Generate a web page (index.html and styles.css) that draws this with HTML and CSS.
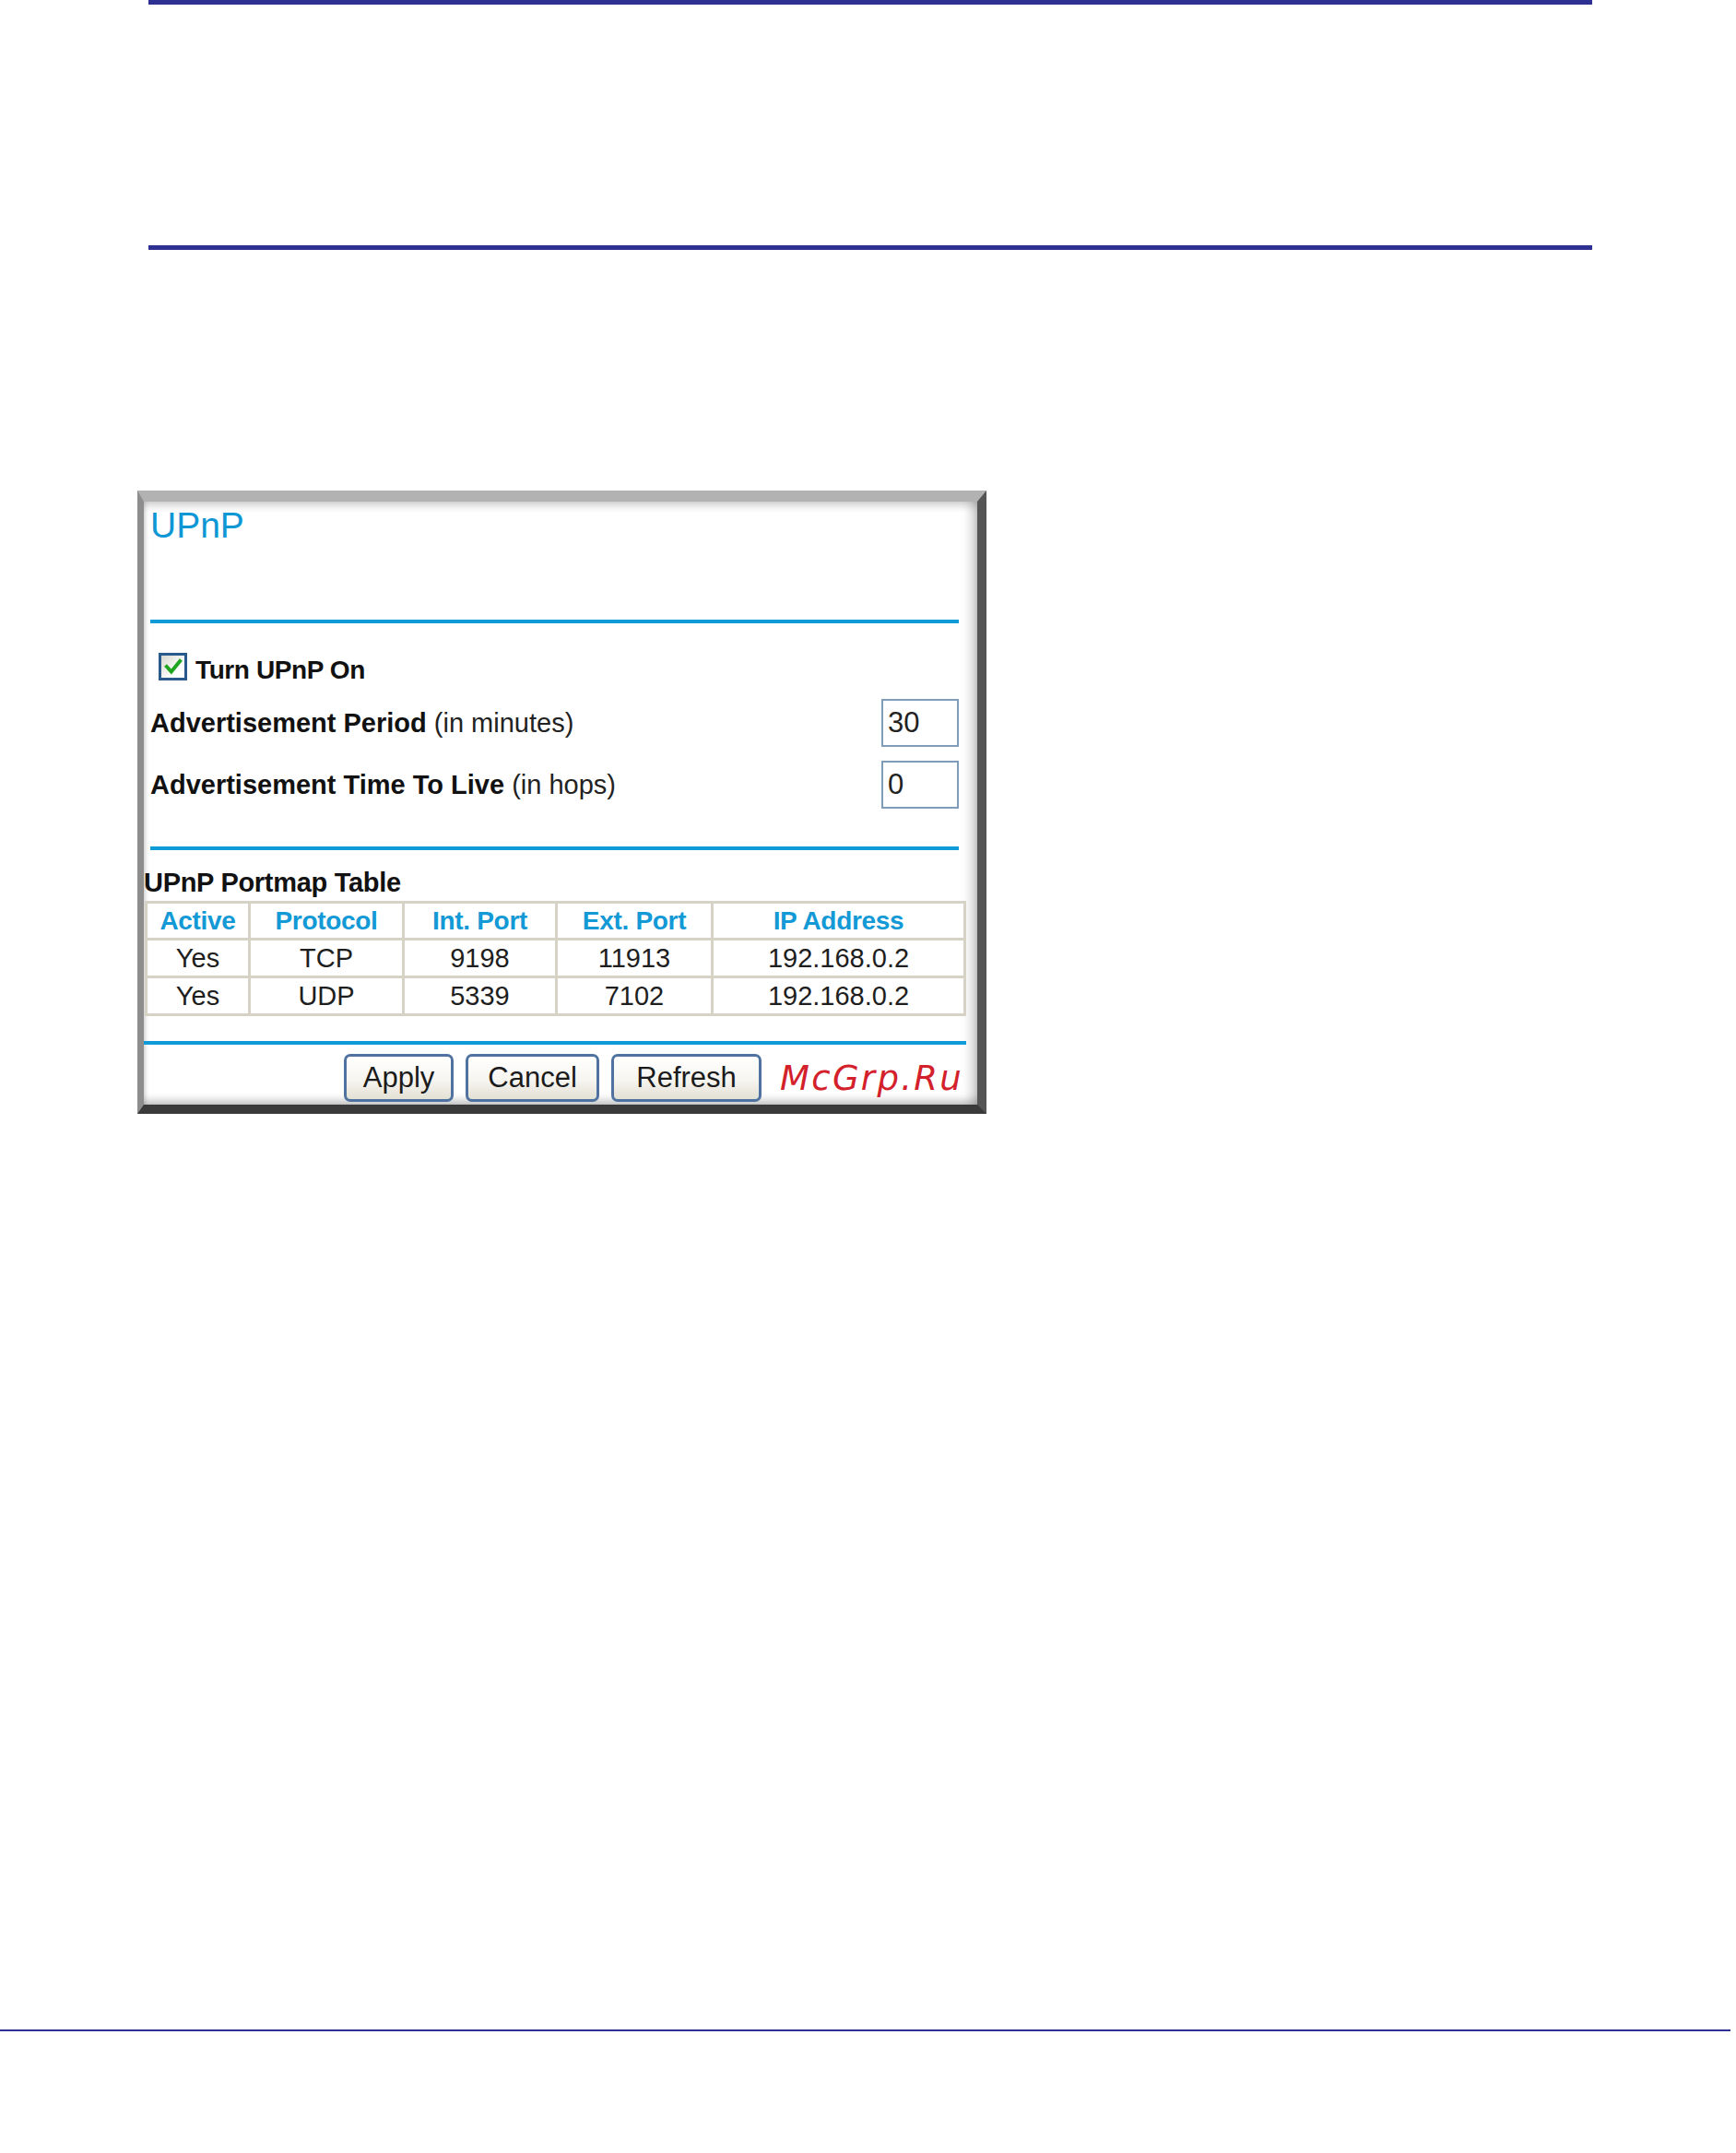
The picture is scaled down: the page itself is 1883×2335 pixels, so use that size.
FILE: index.html
```html
<!DOCTYPE html>
<html lang="en">
<head>
<meta charset="utf-8">
<title>UPnP</title>
<link rel="stylesheet" href="styles.css">
</head>
<body>
<div class="page">
  <header class="doc-header">
    <div class="doc-rule"></div>
    <div class="doc-rule doc-rule-second"></div>
  </header>

  <section class="panel">
    <h1 class="panel-title">UPnP</h1>
    <div class="blue-rule"></div>

    <label class="check-row">
      <span class="checkbox">
        <svg viewBox="0 0 20 20" width="22" height="22"><path d="M3.5 10 L8 15 L16.5 4.5" fill="none" stroke="#1fa51f" stroke-width="3.6" stroke-linecap="square" stroke-linejoin="miter"/></svg>
      </span>
      <span class="check-label">Turn UPnP On</span>
    </label>

    <div class="field-row">
      <span class="field-label"><b>Advertisement Period</b> (in minutes)</span>
      <input class="field-input" type="text" value="30" readonly>
    </div>
    <div class="field-row field-row-second">
      <span class="field-label"><b>Advertisement Time To Live</b> (in hops)</span>
      <input class="field-input" type="text" value="0" readonly>
    </div>

    <div class="blue-rule blue-rule-second"></div>

    <h2 class="table-title">UPnP Portmap Table</h2>
    <table class="portmap">
      <thead>
        <tr>
          <th class="c-active">Active</th>
          <th class="c-proto">Protocol</th>
          <th class="c-int">Int. Port</th>
          <th class="c-ext">Ext. Port</th>
          <th class="c-ip">IP Address</th>
        </tr>
      </thead>
      <tbody>
        <tr>
          <td>Yes</td><td>TCP</td><td>9198</td><td>11913</td><td>192.168.0.2</td>
        </tr>
        <tr>
          <td>Yes</td><td>UDP</td><td>5339</td><td>7102</td><td>192.168.0.2</td>
        </tr>
      </tbody>
    </table>

    <div class="blue-rule blue-rule-wide"></div>

    <div class="button-row">
      <button class="btn btn-apply" type="button">Apply</button>
      <button class="btn btn-cancel" type="button">Cancel</button>
      <button class="btn btn-refresh" type="button">Refresh</button>
      <span class="watermark">McGrp.Ru</span>
    </div>
  </section>

  <footer class="doc-footer">
    <div class="footer-rule"></div>
  </footer>
</div>
</body>
</html>
```

FILE: styles.css
```css
html, body {
  margin: 0;
  padding: 0;
  background: #ffffff;
}

.page {
  width: 1883px;
  min-height: 2335px;
  font-family: "Liberation Sans", Arial, sans-serif;
  color: #1a1a1a;
}

/* document header rules */
.doc-header {
  margin-left: 161px;
  width: 1566px;
}
.doc-rule {
  height: 5px;
  background: #2e3192;
}
.doc-rule-second {
  margin-top: 261px;
}

/* the UPnP screenshot panel */
.panel {
  box-sizing: border-box;
  margin-top: 261px;
  margin-left: 149px;
  width: 921px;
  height: 676px;
  border-style: solid;
  border-width: 12px 10px 10px 7px;
  border-color: #b2b2b2 #555555 #3a3a3a #8d8d8d;
  background: #ffffff;
  box-shadow:
    inset 0 8px 8px -3px rgba(0, 0, 0, 0.16),
    inset -12px 0 12px -6px rgba(0, 0, 0, 0.22),
    inset 0 -9px 9px -4px rgba(0, 0, 0, 0.22),
    inset 4px 0 5px -3px rgba(0, 0, 0, 0.15);
  display: flex;
  flex-direction: column;
}

.panel-title {
  margin: 3px 0 0 7px;
  font-size: 39px;
  line-height: 45px;
  font-weight: normal;
  color: #0e97d4;
}

.blue-rule {
  height: 4px;
  background: #0f9ad8;
  margin: 80px 20px 0 7px;
}
.blue-rule-second {
  margin-top: 41px;
}
.blue-rule-wide {
  margin: 27px 12px 0 0;
}

.check-row {
  display: flex;
  align-items: flex-start;
  margin: 32px 0 0 16px;
  height: 34px;
}
.checkbox {
  box-sizing: border-box;
  width: 31px;
  height: 30px;
  border: 3px solid #2a5a8c;
  background: linear-gradient(135deg, #d8d8d0 0%, #ffffff 70%);
  display: flex;
  align-items: center;
  justify-content: center;
}
.check-label {
  margin-left: 9px;
  padding-top: 4px;
  font-size: 28px;
  line-height: 30px;
  font-weight: bold;
  letter-spacing: -0.4px;
  color: #111;
}

.field-row {
  display: flex;
  justify-content: space-between;
  align-items: center;
  margin: 16px 20px 0 7px;
  height: 52px;
}
.field-row-second {
  margin-top: 15px;
}
.field-label {
  font-size: 29px;
  line-height: 34px;
  color: #222;
}
.field-label b {
  color: #111;
}
.field-input {
  box-sizing: border-box;
  width: 84px;
  height: 52px;
  border: 2px solid #7f9db9;
  padding: 0 0 0 5px;
  margin: 0;
  font-family: "Liberation Sans", Arial, sans-serif;
  font-size: 31px;
  color: #222;
  background: #ffffff;
  outline: none;
}

.table-title {
  margin: 18px 0 0 0;
  font-size: 29px;
  line-height: 34px;
  font-weight: bold;
  letter-spacing: -0.3px;
  color: #111;
}

.portmap {
  margin: 3px 0 0 1px;
  width: 891px;
  border-collapse: collapse;
  border: 3px solid #d3d0c2;
  font-size: 29px;
}
.portmap th,
.portmap td {
  border: 3px solid #d6d3c6;
  padding: 0;
  text-align: center;
}
.portmap th {
  height: 37px;
  font-size: 28px;
  font-weight: bold;
  color: #1399d5;
  letter-spacing: -0.3px;
}
.portmap td {
  height: 38px;
  color: #1e1e1e;
}
.c-active { width: 109px; }
.c-proto { width: 164px; }
.c-int { width: 163px; }
.c-ext { width: 166px; }

.button-row {
  display: flex;
  align-items: center;
  margin: 10px 15px 0 0;
  height: 52px;
  gap: 13px;
  justify-content: flex-end;
}
.btn {
  box-sizing: border-box;
  height: 52px;
  border: 3px solid #4f72a0;
  border-radius: 7px;
  background: linear-gradient(#ffffff 0%, #f6f5f0 55%, #e3e0d4 100%);
  font-family: "Liberation Sans", Arial, sans-serif;
  font-size: 31px;
  color: #1b1b1b;
  padding: 0;
  margin: 0;
}
.btn-apply { width: 119px; }
.btn-cancel { width: 145px; }
.btn-refresh { width: 163px; }

.watermark {
  margin-left: 7px;
  font-family: "DejaVu Sans", Verdana, sans-serif;
  font-style: italic;
  font-size: 37px;
  letter-spacing: 2.3px;
  color: #d3202a;
}

/* footer */
.doc-footer {
  margin-top: 993px;
}
.footer-rule {
  width: 1877px;
  height: 2px;
  background: #2e3192;
}
```
